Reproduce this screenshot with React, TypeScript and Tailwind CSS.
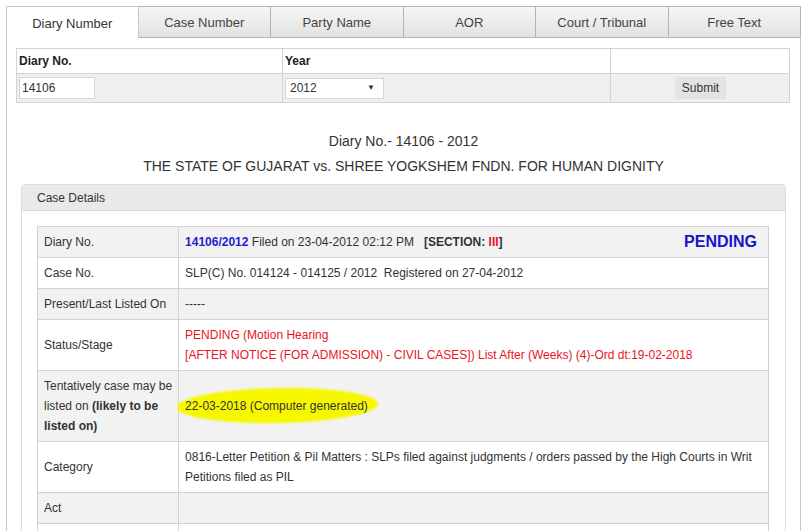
const tabs = ["Diary Number", "Case Number", "Party Name", "AOR", "Court / Tribunal", "Free Text"];

const Row = ({ label, gray, children }: { label: React.ReactNode; gray?: boolean; children?: React.ReactNode }) => (
  <tr className={gray ? "bg-[#f2f2f2]" : "bg-white"}>
    <td className="w-[140px] border border-[#d3d3d3] px-[6px] py-[5px] align-middle whitespace-nowrap">{label}</td>
    <td className="border border-[#d3d3d3] px-[6px] py-[5px] align-middle">{children}</td>
  </tr>
);

export default function App() {
  return (
    <div className="h-[531px] w-[809px] overflow-hidden bg-white pl-[6px] pt-[6px] text-[12px] leading-[20px] text-[#333]" style={{ fontFamily: '"Liberation Sans", Arial, sans-serif' }}>
      <div className="grid w-[795px] grid-cols-6">
        {tabs.map((t, i) =>
          i === 0 ? (
            <div key={t} className="flex h-[32px] items-center justify-center border border-b-0 border-[#c8c8c8] bg-white pt-[2px] text-[13px] text-[#333]">
              {t}
            </div>
          ) : (
            <div key={t} className="flex h-[32px] items-center justify-center border border-l-0 border-[#b4b4b4] bg-gradient-to-b from-[#f6f6f6] to-[#e2e2e2] pt-[2px] text-[13px] text-[#444]">
              {t}
            </div>
          )
        )}
      </div>

      <div className="w-[795px] border border-t-0 border-[#c8c8c8] px-[9px] pt-[10px] pb-[20px]">
        <table className="w-[774px] border-collapse">
          <tbody>
            <tr className="h-[25px] bg-white font-bold text-[12px] text-[#222]">
              <td className="w-[266px] border border-[#d3d3d3] px-[2px]">Diary No.</td>
              <td className="w-[328px] border border-[#d3d3d3] px-[2px]">Year</td>
              <td className="border border-[#d3d3d3]"></td>
            </tr>
            <tr className="h-[29px] bg-[#efefef]">
              <td className="border border-[#d3d3d3] px-[2px]">
                <div className="flex h-[22px] w-[76px] items-center border border-[#d6d6d6] bg-white px-[2px]">14106</div>
              </td>
              <td className="border border-[#d3d3d3] px-[2px]">
                <div className="flex h-[21px] w-[99px] items-center justify-between border border-[#d6d6d6] bg-white pl-[4px] pr-[8px]">
                  <span>2012</span>
                  <span className="text-[8px]">▼</span>
                </div>
              </td>
              <td className="border border-[#d3d3d3]">
                <div className="ml-[64px] flex h-[22px] w-[51px] items-center justify-center bg-[#e3e3e3] text-[#333]">Submit</div>
              </td>
            </tr>
          </tbody>
        </table>

        <div className="mt-[26px] text-center text-[14px] leading-[25px] text-[#333]">
          <div>Diary No.- 14106 - 2012</div>
          <div>THE STATE OF GUJARAT vs. SHREE YOGKSHEM FNDN. FOR HUMAN DIGNITY</div>
        </div>

        <div className="mx-[5px] mt-[5px] rounded-t-[4px] border border-[#dcdcdc]">
          <div className="flex h-[26px] items-center rounded-t-[4px] border-b border-[#dcdcdc] bg-[#e8e9ea] px-[15px]">Case Details</div>
          <div className="pl-[15px] pr-[16px] pt-[15px]">
            <table className="w-full border-collapse">
              <tbody>
                <Row label="Diary No." gray>
                  <div className="flex items-center justify-between pr-[5px]">
                    <span>
                      <b className="text-[#1f1fd0]">14106/2012</b> Filed on 23-04-2012 02:12 PM&nbsp;&nbsp;&nbsp;
                      <b>
                        [SECTION: <span className="text-[#e8161e]">III</span>]
                      </b>
                    </span>
                    <b className="text-[16px] text-[#1515c8]">PENDING</b>
                  </div>
                </Row>
                <Row label="Case No.">SLP(C) No. 014124 - 014125 / 2012&nbsp;&nbsp;Registered on 27-04-2012</Row>
                <Row label="Present/Last Listed On" gray>
                  -----
                </Row>
                <Row label="Status/Stage">
                  <div className="text-[#e8161e]">
                    PENDING (Motion Hearing
                    <br />
                    [AFTER NOTICE (FOR ADMISSION) - CIVIL CASES]) List After (Weeks) (4)-Ord dt:19-02-2018
                  </div>
                </Row>
                <Row
                  gray
                  label={
                    <>
                      Tentatively case may be
                      <br />
                      listed on <b>(likely to be</b>
                      <br />
                      <b>listed on)</b>
                    </>
                  }
                >
                  <span className="relative inline-block">
                    <span className="absolute -left-[8px] -right-[10px] -top-[8px] -bottom-[7px] -rotate-[1deg] rounded-[50%] bg-[#f7f700] blur-[1px]"></span>
                    <span className="relative">22-03-2018 (Computer generated)</span>
                  </span>
                </Row>
                <Row label="Category">
                  0816-Letter Petition &amp; Pil Matters : SLPs filed against judgments / orders passed by the High Courts in Writ
                  <br />
                  Petitions filed as PIL
                </Row>
                <Row label="Act" gray></Row>
                <Row label={<span>&nbsp;</span>}></Row>
              </tbody>
            </table>
          </div>
        </div>
      </div>
    </div>
  );
}
